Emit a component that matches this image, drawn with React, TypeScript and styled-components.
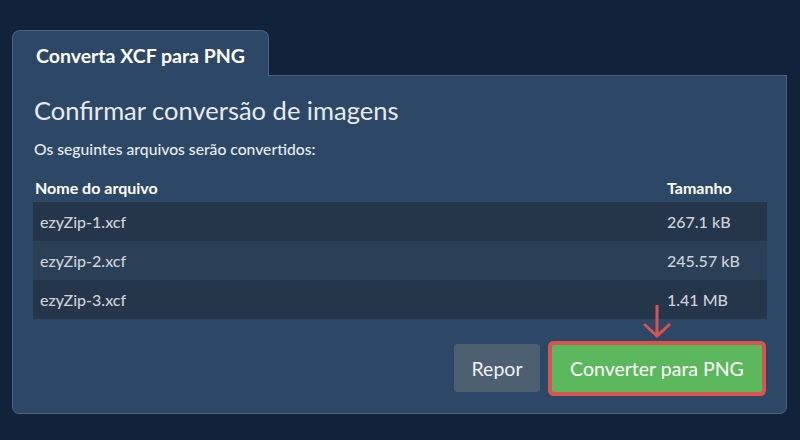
import React from "react";
import styled, { createGlobalStyle } from "styled-components";

const GlobalStyle = createGlobalStyle`
  html, body {
    margin: 0;
    padding: 0;
    background: #11223a;
    font-family: Lato, "Open Sans", sans-serif;
  }
`;

const files = [
  { name: "ezyZip-1.xcf", size: "267.1 kB" },
  { name: "ezyZip-2.xcf", size: "245.57 kB" },
  { name: "ezyZip-3.xcf", size: "1.41 MB" },
];

export default function App() {
  return (
    <>
      <GlobalStyle />
      <Page>
        <Tab>Converta XCF para PNG</Tab>
        <Panel>
          <Heading>Confirmar conversão de imagens</Heading>
          <Lead>Os seguintes arquivos serão convertidos:</Lead>
          <FileTable>
            <thead>
              <tr>
                <HeadCell>Nome do arquivo</HeadCell>
                <HeadCell $size>Tamanho</HeadCell>
              </tr>
            </thead>
            <tbody>
              {files.map((f, i) => (
                <Row key={f.name} $odd={i % 2 === 0}>
                  <Cell>{f.name}</Cell>
                  <Cell>{f.size}</Cell>
                </Row>
              ))}
            </tbody>
          </FileTable>
          <Actions>
            <ResetButton type="button">Repor</ResetButton>
            <ConvertWrap>
              <Arrow width="30" height="34" viewBox="0 0 30 34" aria-hidden="true">
                <path
                  d="M15 1 V32 M2 20 L15 32 L28 20"
                  fill="none"
                  stroke="#d9534f"
                  strokeWidth="3"
                />
              </Arrow>
              <ConvertButton type="button">Converter para PNG</ConvertButton>
            </ConvertWrap>
          </Actions>
        </Panel>
      </Page>
    </>
  );
}

const Page = styled.div`
  padding: 30px 13px 0 12px;
  height: 440px;
  box-sizing: border-box;
`;

const Tab = styled.div`
  position: relative;
  z-index: 1;
  width: 257px;
  height: 46px;
  box-sizing: border-box;
  margin-bottom: -1px;
  padding: 13px 0 0 23px;
  background: #2d4866;
  border: 1px solid #4b6282;
  border-bottom: none;
  border-radius: 8px 8px 0 0;
  color: #ffffff;
  font-size: 19.5px;
  font-weight: 700;
`;

const Panel = styled.div`
  height: 339px;
  box-sizing: border-box;
  padding: 18px 20px 0 21px;
  background: #2d4866;
  border: 1px solid #4b6282;
  border-radius: 0 0 7px 7px;
`;

const Heading = styled.h1`
  margin: 0;
  color: #e8ebee;
  font-size: 25.5px;
  font-weight: 400;
  line-height: 32px;
`;

const Lead = styled.p`
  margin: 13px 0 0;
  color: #e8ebee;
  font-size: 15.7px;
  font-weight: 500;
  line-height: 20px;
`;

const FileTable = styled.table`
  width: 734px;
  margin: 19px 0 0 -1px;
  border-collapse: collapse;
`;

const HeadCell = styled.th<{ $size?: boolean }>`
  text-align: left;
  padding: 0 0 4px ${({ $size }) => ($size ? "7px" : "2px")};
  width: ${({ $size }) => ($size ? "100px" : "auto")};
  color: #ffffff;
  font-size: 16px;
  font-weight: 700;
  line-height: 20px;
`;

const Row = styled.tr<{ $odd: boolean }>`
  height: 39px;
  background: ${({ $odd }) => ($odd ? "#25364b" : "#2b3f57")};
`;

const Cell = styled.td`
  padding: 0 0 0 7px;
  color: #cdd2d9;
  font-size: 16px;
  font-weight: 500;
`;

const Actions = styled.div`
  display: flex;
  justify-content: flex-end;
  align-items: center;
  gap: 12px;
  margin-top: 25px;
  padding-right: 4px;
`;

const ResetButton = styled.button`
  width: 86px;
  height: 48px;
  border: none;
  border-radius: 4px;
  background: #4e5f71;
  color: #eef0f2;
  font-family: inherit;
  font-size: 19.5px;
`;

const ConvertWrap = styled.div`
  position: relative;
`;

const Arrow = styled.svg`
  position: absolute;
  left: 50%;
  bottom: calc(100% + 7px);
  transform: translateX(-50%);
`;

const ConvertButton = styled.button`
  display: block;
  width: 210px;
  height: 47px;
  border: none;
  border-radius: 2px;
  background: #5cb85c;
  box-shadow: 0 0 0 4px #d9534f;
  color: #ffffff;
  font-family: inherit;
  font-size: 19.5px;
`;
